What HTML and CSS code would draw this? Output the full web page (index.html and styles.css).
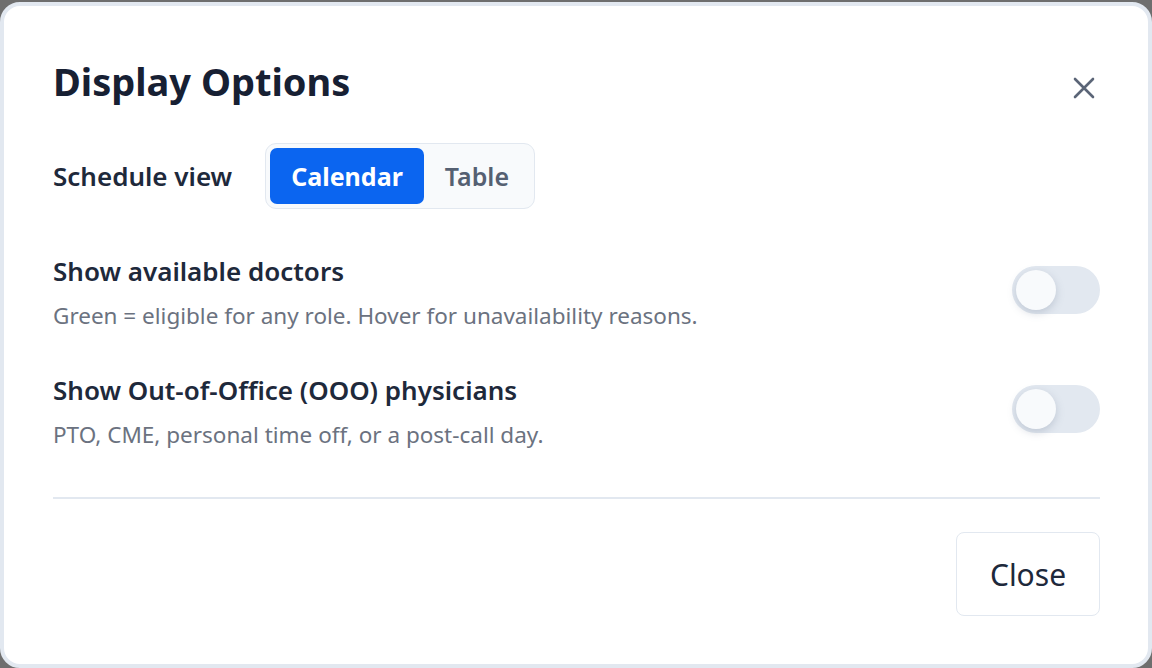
FILE: index.html
```html
<!DOCTYPE html>
<html lang="en">
<head>
<meta charset="utf-8">
<title>Display Options</title>
<link rel="stylesheet" href="styles.css">
</head>
<body>
<div class="dialog">
  <div class="header">
    <h1 class="title">Display Options</h1>
    <button class="close-x" aria-label="Close">
      <svg width="22" height="22" viewBox="0 0 22 22"><path d="M2 2L20 20M20 2L2 20" stroke="#5b6577" stroke-width="2.6" stroke-linecap="round"/></svg>
    </button>
  </div>
  <div class="view-row">
    <span class="view-label">Schedule view</span>
    <div class="segmented">
      <button class="seg active">Calendar</button>
      <button class="seg">Table</button>
    </div>
  </div>
  <div class="option first">
    <div class="option-text">
      <div class="option-title">Show available doctors</div>
      <div class="option-desc">Green = eligible for any role. Hover for unavailability reasons.</div>
    </div>
    <div class="toggle"><span class="knob"></span></div>
  </div>
  <div class="option second">
    <div class="option-text">
      <div class="option-title">Show Out-of-Office (OOO) physicians</div>
      <div class="option-desc">PTO, CME, personal time off, or a post-call day.</div>
    </div>
    <div class="toggle"><span class="knob"></span></div>
  </div>
  <div class="divider"></div>
  <div class="footer">
    <button class="btn-close">Close</button>
  </div>
</div>
</body>
</html>
```
FILE: styles.css
```css
* { box-sizing: border-box; }
html, body { margin: 0; height: 100%; }
body {
  background: #6e6e6e;
  font-family: "Noto Sans", "Open Sans", sans-serif;
  color: #1e293b;
  padding-top: 2px;
  overflow: hidden;
}
.dialog {
  width: 1152px;
  height: 666px;
  background: #ffffff;
  border: 4px solid #e2e8f0;
  border-radius: 20px;
  padding: 0 48px 0 49px;
  display: flex;
  flex-direction: column;
}
.header {
  display: flex;
  align-items: flex-start;
  justify-content: space-between;
  margin-top: 50px;
}
.title {
  margin: 0;
  font-size: 38px;
  line-height: 50px;
  font-weight: 700;
  color: #172033;
}
.close-x {
  border: 0;
  background: none;
  padding: 0;
  width: 22px;
  height: 22px;
  margin-right: 5px;
  margin-top: 21px;
  display: flex;
}
.view-row {
  display: flex;
  align-items: center;
  gap: 33px;
  margin-top: 37px;
}
.view-label {
  font-size: 26px;
  font-weight: 600;
  color: #1e293b;
}
.segmented {
  display: flex;
  padding: 4px;
  border: 1.5px solid #e2e8f0;
  background: #f8fafc;
  border-radius: 11px;
}
.seg {
  border: 0;
  background: none;
  font-family: inherit;
  font-size: 25px;
  font-weight: 600;
  color: #556072;
  height: 56px;
  padding: 0 21px;
  border-radius: 7px;
}
.seg.active {
  background: #0b65f0;
  color: #ffffff;
  font-weight: 700;
}
.option {
  display: flex;
  align-items: flex-start;
  justify-content: space-between;
}
.option.first { margin-top: 45px; }
.option.second { margin-top: 42px; }
.option-title {
  font-size: 26px;
  font-weight: 600;
  color: #1e293b;
  line-height: 34px;
}
.option-desc {
  font-size: 22.5px;
  color: #6b7280;
  line-height: 30px;
  margin-top: 13px;
}
.toggle {
  width: 88px;
  height: 48px;
  border-radius: 24px;
  background: #e2e8f0;
  margin-top: 12px;
  display: flex;
  align-items: center;
  padding: 0 4px;
}
.knob {
  width: 40px;
  height: 40px;
  border-radius: 50%;
  background: #f8fafc;
  box-shadow: 0 3px 8px rgba(100, 116, 139, 0.28);
}
.divider {
  height: 2px;
  background: #e2e8f0;
  margin-top: 47px;
}
.footer {
  display: flex;
  justify-content: flex-end;
  margin-top: 33px;
}
.btn-close {
  width: 144px;
  height: 84px;
  background: #ffffff;
  border: 1.5px solid #e2e8f0;
  border-radius: 8px;
  font-family: inherit;
  font-size: 30px;
  color: #1e293b;
}
```
